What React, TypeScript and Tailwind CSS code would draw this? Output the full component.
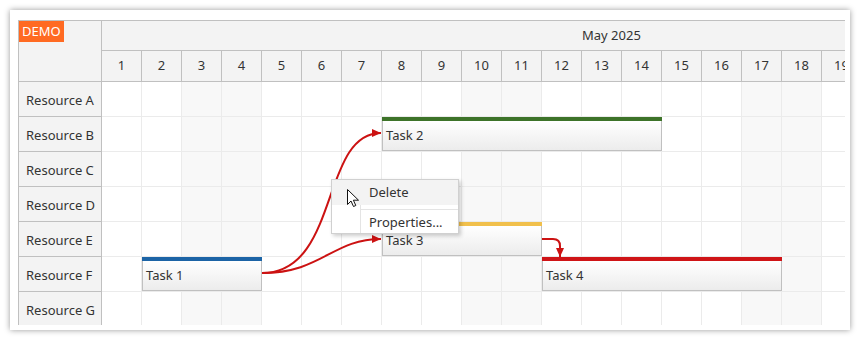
const days = Array.from({ length: 20 }, (_, i) => i + 1);
const weekend = new Set([3, 4, 10, 11, 17, 18]);
const resources = ["A", "B", "C", "D", "E", "F", "G"];

const tasks = [
  { name: "Task 1", left: 40, top: 175, width: 120, color: "bg-[#1c64a6]" },
  { name: "Task 2", left: 280, top: 35, width: 280, color: "bg-[#3d7329]" },
  { name: "Task 3", left: 280, top: 140, width: 160, color: "bg-[#f1c04c]" },
  { name: "Task 4", left: 440, top: 175, width: 240, color: "bg-[#cf1417]" },
];

const font = { fontFamily: '"Segoe UI", "Noto Sans", "Open Sans", sans-serif' };

function Links() {
  return (
    <svg className="absolute left-0 top-0 pointer-events-none" width="760" height="260">
      <defs>
        <marker id="arr" markerUnits="userSpaceOnUse" markerWidth="10" markerHeight="10" refX="9" refY="5" orient="auto">
          <path d="M0,1 L9,5 L0,9 Z" fill="#cc1212" />
        </marker>
      </defs>
      <g stroke="#cc1212" strokeWidth="2" fill="none">
        <path d="M160,191 C238,191 218,51 279,51" markerEnd="url(#arr)" />
        <path d="M160,191 C220,191 230,157 279,157" markerEnd="url(#arr)" />
        <path d="M440,157 L451,157 Q458,157 458,164 L458,175" markerEnd="url(#arr)" />
      </g>
    </svg>
  );
}

export default function App() {
  return (
    <div className="relative w-[860px] h-[340px] bg-white text-[13px] text-[#333]" style={font}>
      <div className="absolute left-[10px] top-[10px] w-[840px] h-[320px] bg-white shadow-[0_0_6px_rgba(0,0,0,0.4)] pl-[8px] pt-[10px] pr-[5px] pb-[5px]">
        <div className="flex h-full border-l border-t border-[#c0c0c0] overflow-hidden">
          {/* row headers */}
          <div className="w-[83px] shrink-0 bg-[#f3f3f3]">
            <div className="h-[61px] border-b border-r border-[#c0c0c0] relative">
              <div className="absolute left-0 top-0 h-[21px] px-[3px] bg-[#ff6a22] text-white leading-[21px]">DEMO</div>
            </div>
            {resources.map((r) => (
              <div key={r} className="h-[35px] border-b border-r border-[#c0c0c0] flex items-center pl-[7px] pt-[3px]">
                Resource {r}
              </div>
            ))}
          </div>

          {/* timeline */}
          <div className="flex-1 overflow-hidden">
            <div className="w-[800px]">
              <div className="h-[30px] border-b border-[#c0c0c0] bg-[#f3f3f3] flex items-center pl-[480px]">May 2025</div>
              <div className="h-[31px] border-b border-[#c0c0c0] bg-[#f3f3f3] flex">
                {days.map((d) => (
                  <div key={d} className="w-[40px] shrink-0 border-r border-[#c0c0c0] flex items-center justify-center">
                    {d}
                  </div>
                ))}
              </div>
              <div className="relative">
                {resources.map((r) => (
                  <div key={r} className="h-[35px] border-b border-[#ebebeb] flex">
                    {days.map((d) => (
                      <div
                        key={d}
                        className={`w-[40px] shrink-0 border-r border-[#ebebeb] ${weekend.has(d) ? "bg-[#f8f8f8]" : "bg-white"}`}
                      />
                    ))}
                  </div>
                ))}
                {tasks.map((t) => (
                  <div
                    key={t.name}
                    className="absolute h-[34px] flex flex-col"
                    style={{ left: t.left, top: t.top, width: t.width }}
                  >
                    <div className={`h-[4px] ${t.color}`} />
                    <div className="flex-1 border border-t-0 border-[#c0c0c0] bg-gradient-to-b from-white to-[#ececec] flex items-center pl-[3px]">
                      {t.name}
                    </div>
                  </div>
                ))}
                <Links />
              </div>
            </div>
          </div>
        </div>
      </div>

      {/* context menu */}
      <div className="absolute left-[331px] top-[179px] w-[128px] h-[55px] bg-white border border-[#d0d0d0] shadow-[2px_2px_4px_rgba(0,0,0,0.2)]">
        <div className="absolute left-[28px] top-0 bottom-0 w-px bg-[#e4e4e4]" />
        <div className="relative h-[25px] bg-[#f3f3f3] flex items-center pl-[37px]">Delete</div>
        <div className="relative h-[7px] flex items-center pl-[28px]">
          <div className="h-px w-full bg-[#e4e4e4] mt-[2px]" />
        </div>
        <div className="relative h-[21px] flex items-center pl-[37px]">Properties...</div>
      </div>

      {/* cursor */}
      <svg className="absolute left-[347px] top-[189px]" width="13" height="19" viewBox="0 0 13 19">
        <path d="M0.5,0.5 L0.5,15.5 L4,12 L6.5,17.5 L8.8,16.5 L6.4,11.2 L11.5,11.2 Z" fill="white" stroke="#111" strokeWidth="1" strokeLinejoin="round" />
      </svg>
    </div>
  );
}
